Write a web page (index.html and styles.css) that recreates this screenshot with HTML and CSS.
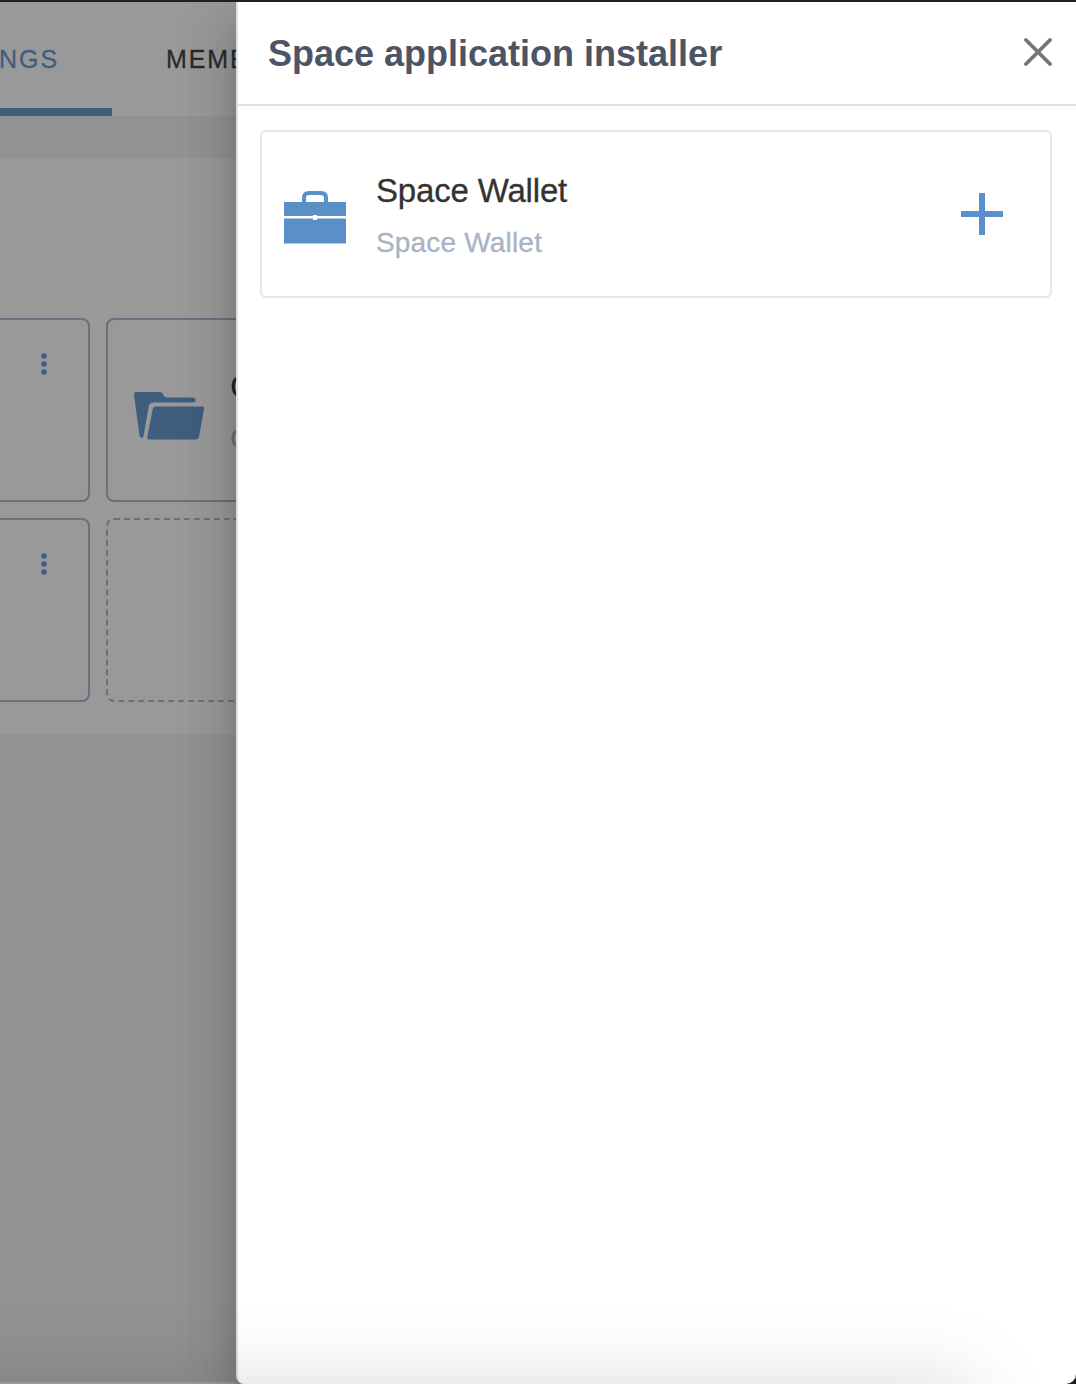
FILE: index.html
```html
<!DOCTYPE html>
<html lang="en">
<head>
<meta charset="utf-8">
<title>Space application installer</title>
<link rel="stylesheet" href="styles.css">
</head>
<body>
<div class="page">
  <main class="workspace">
    <nav class="tabs">
      <div class="tab tab-active"><span class="tab-label">SETTINGS</span></div>
      <div class="tab"><span class="tab-label">MEMBERS</span></div>
    </nav>
    <section class="panel">
      <div class="app app-left">
        <svg class="dots" viewBox="0 0 6 22"><circle cx="3" cy="3" r="2.8"/><circle cx="3" cy="11" r="2.8"/><circle cx="3" cy="19" r="2.8"/></svg>
      </div>
      <div class="app app-docs">
        <svg class="folder" viewBox="0 0 70 48"><path d="M2 0H26Q28 0 29 2L30 4Q31 5.500 33 5.500H59Q61.500 5.500 61.500 8T59 10.500H20Q15.500 10.500 14.800 14L9.500 44Q9 46 7.500 46Q6 46 5.500 43L0 3Q0 0 2 0Z"/><path d="M21.500 14.500H68Q70.300 14.500 70 17L65 45Q64.300 47.500 62 47.500H16Q13 47.500 13.400 44.500L18.700 17Q19.300 14.500 21.500 14.500Z"/></svg>
        <div class="app-text"><div class="app-name">Chat</div><div class="app-desc">Chat</div></div>
      </div>
      <div class="app app-left">
        <svg class="dots" viewBox="0 0 6 22"><circle cx="3" cy="3" r="2.8"/><circle cx="3" cy="11" r="2.8"/><circle cx="3" cy="19" r="2.8"/></svg>
      </div>
      <div class="app app-empty"></div>
    </section>
  </main>
  <aside class="drawer">
    <header class="drawer-header">
      <h1 class="drawer-title">Space application installer</h1>
      <svg class="close" viewBox="0 0 28 28"><path d="M2 2L26 26M26 2L2 26"/></svg>
    </header>
    <div class="drawer-body">
      <article class="card">
        <svg class="briefcase" viewBox="0 0 62 53"><path class="handle" d="M20 12V7Q20 2 25 2H37Q42 2 42 7V12"/><path d="M0 11H62V25H33V24H29V25H0ZM0 27.500H29V29H33V27.500H62V52.500H0Z"/></svg>
        <div class="card-text"><div class="card-name"><span>Space Wallet</span></div><div class="card-desc"><span>Space Wallet</span></div></div>
        <svg class="plus" viewBox="0 0 42 42"><path d="M18 0H24V18H42V24H24V42H18V24H0V18H18Z"/></svg>
      </article>
    </div>
  </aside>
  <div class="bottom-shade"></div>
</div>
</body>
</html>
```
FILE: styles.css
```css
* { box-sizing: border-box; }
body { margin: 0; font-family: "Liberation Sans", Arial, sans-serif; }
svg { display: block; flex: none; }
.page { position: relative; display: flex; height: 1384px; border-top: 2px solid #231f20; overflow: hidden; background: linear-gradient(90deg, #999 50%, #222 50%); }
.workspace { width: 236px; height: 1382px; flex: none; overflow: hidden; background: #929292; border-bottom: 2px solid #a8a8a8; }
.tabs { display: flex; height: 114px; background: #999; }
.tab { flex: none; height: 114px; line-height: 115px; font-size: 25px; letter-spacing: 1.9px; color: #2a2a2a; padding-left: 54px; -webkit-text-stroke: .3px; }
.tab-active { width: 112px; padding: 0 53px 0 0; border-bottom: 8px solid #3f5e7e; color: #3f5e7e; display: flex; justify-content: flex-end; }
.panel { display: grid; grid-template-columns: 90px 420px; grid-template-rows: 184px 184px; gap: 16px; height: 576px; margin-top: 42px; padding-top: 160px; background: #999; }
.app { display: flex; border: 2px solid #6b7080; border-radius: 8px; }
.app-left { justify-content: flex-end; border-left: 0; border-radius: 0 8px 8px 0; padding: 33px 41px 0 0; }
.dots { width: 6px; height: 22px; fill: #3f5e7e; }
.app-docs { padding: 72px 0 0 26px; }
.folder { width: 70px; height: 48px; fill: #3f5e7e; }
.app-text { margin: -26px 0 0 26px; }
.app-name { font-size: 33px; line-height: 42px; color: #252525; }
.app-desc { font-size: 28px; line-height: 34px; margin-top: 14px; color: #6b7080; }
.app-empty { border-style: dashed; }
.drawer { position: relative; flex: 1; height: 1382px; background: #fff; border-left: 2px solid #e0e0e0; border-radius: 0 0 10px 8px; box-shadow: 0 16px 20px -10px rgba(0,0,0,.2), 0 32px 48px 4px rgba(0,0,0,.14), 0 12px 60px 10px rgba(0,0,0,.08); }
.drawer-header { display: flex; justify-content: space-between; align-items: center; height: 104px; padding: 0 24px 2px 30px; border-bottom: 2px solid #e0e0e0; }
.drawer-title { margin: 4px 0 0; font-size: 36px; line-height: 44px; color: #4d5466; white-space: nowrap; }
.close { width: 28px; height: 28px; fill: none; stroke: #757575; stroke-width: 3.8; stroke-linecap: round; }
.drawer-body { padding: 24px 24px 0 22px; }
.card { display: flex; height: 168px; padding: 0 47px 0 22px; border: 2px solid #e1e8ee; border-radius: 6px; }
.briefcase { width: 62px; height: 53px; margin-top: 59px; fill: #5a8fc8; }
.handle { fill: none; stroke: #5a8fc8; stroke-width: 4; }
.card-text { flex: 1; padding: 39px 0 0 30px; -webkit-text-stroke: .3px; }
.card-name { font-size: 33px; line-height: 40px; letter-spacing: -.18px; color: #333; }
.card-desc { margin-top: 15px; font-size: 28px; line-height: 34px; letter-spacing: .18px; color: #a8b3c5; }
.plus { width: 42px; height: 42px; margin-top: 61px; fill: #5a8fc8; }
.bottom-shade { position: absolute; top: 1382px; left: -100px; width: 1073px; height: 100px; box-shadow: 0 0 84px rgba(0,0,0,.15); pointer-events: none; }
```
